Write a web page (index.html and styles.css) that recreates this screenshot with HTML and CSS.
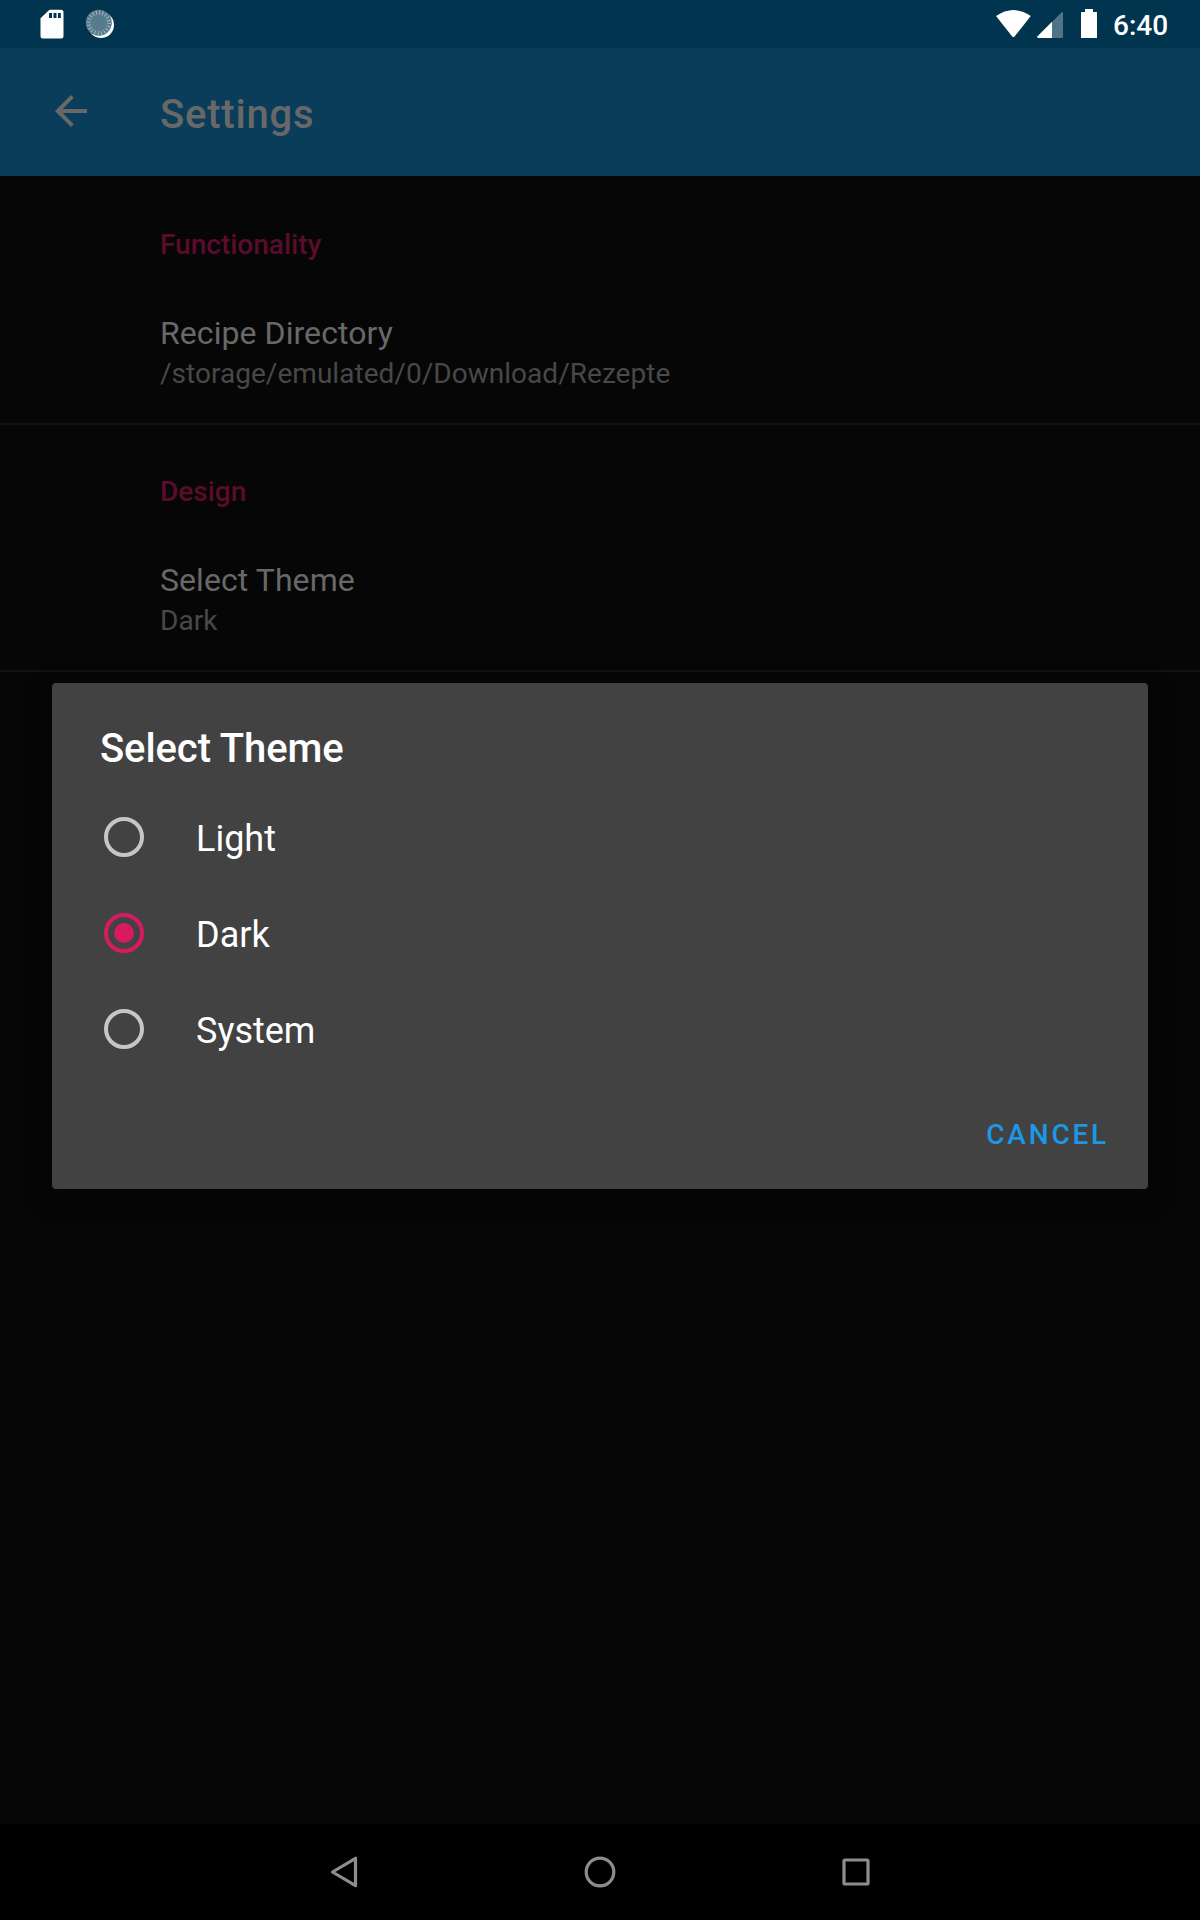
FILE: index.html
```html
<!DOCTYPE html>
<html lang="en">
<head>
<meta charset="utf-8">
<title>Settings</title>
<link rel="stylesheet" href="styles.css">
</head>
<body>
<div class="screen">
  <header class="statusbar">
    <svg class="status-left" width="80" height="48" viewBox="0 0 80 48">
      <path fill="#fff" fill-rule="evenodd" d="M9.5 9.7H21a2.5 2.5 0 0 1 2.5 2.5V36a2.5 2.5 0 0 1-2.5 2.5H3A2.5 2.5 0 0 1 .5 36V18.3zM9 13v5h3v-5zm4.500 0v5h3v-5zm4.500 0v5h2.800v-5z"/>
      <circle cx="61" cy="25" r="13" fill="#fff"/>
      <circle cx="58.8" cy="22.8" r="13" fill="#567a8e"/>
      <circle cx="58.8" cy="22.8" r="10.2" fill="none" stroke="#a3b6c1" stroke-width="4" stroke-dasharray="1 2.204"/>
    </svg>
    <svg class="status-right" width="110" height="48" viewBox="0 0 110 48">
      <path fill="#fff" d="M0 16Q17.400 4 34.800 16L18.600 36.400Q17.400 37.600 16.200 36.400z"/>
      <path fill="#4f7387" d="M56 22L65.500 12.500Q67 11.500 67 13V36.500Q67 38 65.500 38H56z"/>
      <path fill="#fff" d="M56 21.700V38H42Q40.500 37.500 41.500 36.200z"/>
      <path fill="#fff" d="M89 9h8v3h3.500q.5 0 .5.500v25q0 .5-.5.500h-15q-.5 0-.5-.500v-25q0-.500.500-.500H89z"/>
    </svg>
    <span class="clock">6:40</span>
  </header>
  <div class="toolbar">
    <svg class="back" width="36" height="36" viewBox="0 0 36 36"><path fill="none" stroke="#686868" stroke-width="4" d="M34 18H5M19.400 3.400L4.800 18L19.400 32.600"/></svg>
    <h1 class="toolbar-title">Settings</h1>
  </div>
  <main class="content">
    <section class="group">
      <h2 class="group-title">Functionality</h2>
      <div class="pref-title">Recipe Directory</div>
      <div class="pref-summary">/storage/emulated/0/Download/Rezepte</div>
    </section>
    <section class="group">
      <h2 class="group-title">Design</h2>
      <div class="pref-title">Select Theme</div>
      <div class="pref-summary">Dark</div>
    </section>
    <div class="dialog" role="dialog">
      <h2 class="dialog-title">Select Theme</h2>
      <div class="option"><span class="radio"></span><span class="label">Light</span></div>
      <div class="option"><span class="radio checked"></span><span class="label">Dark</span></div>
      <div class="option"><span class="radio"></span><span class="label">System</span></div>
      <div class="actions"><span class="cancel">CANCEL</span></div>
    </div>
  </main>
  <nav class="navbar">
    <svg width="32" height="32" viewBox="0 0 32 32"><path d="M27.500 2.300V29.700L4.500 16z"/></svg>
    <svg width="32" height="32" viewBox="0 0 32 32"><circle cx="16" cy="16" r="13.800"/></svg>
    <svg width="32" height="32" viewBox="0 0 32 32"><rect x="4" y="4" width="24" height="24" rx="1"/></svg>
  </nav>
</div>
</body>
</html>
```
FILE: styles.css
```css
* { box-sizing: border-box; }
body { margin: 0; background: #060606; font-family: Roboto, sans-serif; }
h1, h2 { margin: 0; font-weight: 500; }
svg { display: block; }
.screen { width: 1200px; height: 1920px; display: flex; flex-direction: column; overflow: hidden; }
.statusbar { height: 48px; flex: none; background: #01344f; display: flex; padding: 0 32px 0 40px; }
.status-right { margin-left: auto; }
.clock { color: #fff; font-size: 28px; font-weight: 500; line-height: 52px; margin-left: 7px; width: 55px; white-space: nowrap; }
.toolbar { height: 128px; flex: none; background: #0a3d5a; display: flex; align-items: center; padding: 0 0 2px 53px; }
.toolbar-title { margin-left: 71px; padding-top: 8px; font-size: 40px; line-height: 48px; letter-spacing: 0.8px; color: #686868; }
.content { flex: 1; position: relative; }
.group { height: 247px; padding: 50px 160px 0; border-bottom: 2px solid #121212; }
.group:first-child { height: 249px; padding-top: 52px; }
.group-title { font-size: 28px; line-height: 34px; color: #5a0c2a; }
.pref-title { margin-top: 52px; font-size: 32px; line-height: 38px; letter-spacing: 0.07px; color: #686868; }
.pref-summary { margin-top: 5px; font-size: 28px; line-height: 34px; letter-spacing: 0.03px; color: #484848; }
.dialog { position: absolute; left: 52px; top: 507px; width: 1096px; height: 506px; padding: 42px 40px 0 48px; background: #424242; border-radius: 4px; box-shadow: 0 8px 30px rgba(0,0,0,.3); color: #fff; }
.dialog-title { font-size: 40px; line-height: 48px; letter-spacing: -0.1px; margin-bottom: 17px; }
.option { height: 96px; display: flex; align-items: center; padding-left: 4px; }
.radio { width: 40px; height: 40px; border: 4px solid #c6c6c6; border-radius: 50%; margin-bottom: 2px; display: grid; place-items: center; }
.radio.checked { border-color: #d81b60; }
.radio.checked::before { content: ""; width: 20px; height: 20px; border-radius: 50%; background: #d81b60; }
.label { margin-left: 52px; padding-top: 2px; font-size: 36px; line-height: 42px; }
.actions { display: flex; justify-content: flex-end; margin-top: 40px; }
.cancel { font-size: 28px; line-height: 34px; font-weight: 500; letter-spacing: 2.8px; margin-right: -1px; color: #1b97e5; }
.navbar { height: 96px; flex: none; background: #000; display: flex; justify-content: center; align-items: center; gap: 224px; }
.navbar svg { fill: none; stroke: #8d8d8d; stroke-width: 3.2; stroke-linejoin: round; }
```
